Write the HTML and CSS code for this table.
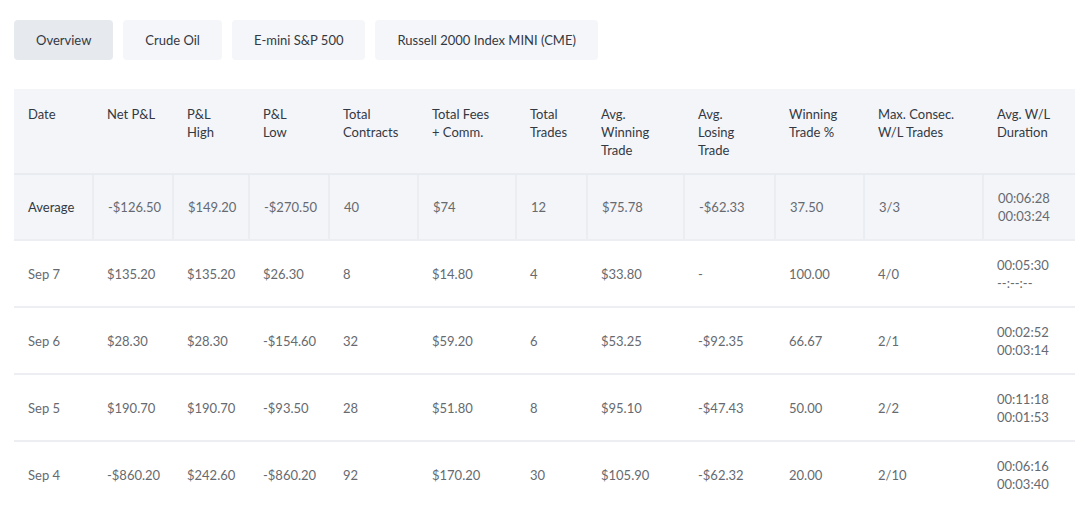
FILE: index.html
```html
<!DOCTYPE html>
<html>
<head>
<meta charset="utf-8">
<link rel="stylesheet" href="styles.css">
</head>
<body>
<div class="page">
  <div class="tabs">
    <button class="tab active">Overview</button>
    <button class="tab">Crude Oil</button>
    <button class="tab">E-mini S&amp;P 500</button>
    <button class="tab">Russell 2000 Index MINI (CME)</button>
  </div>
  <table class="stats">
    <colgroup>
      <col style="width:79px"><col style="width:80px"><col style="width:76px"><col style="width:80px">
      <col style="width:89px"><col style="width:98px"><col style="width:71px"><col style="width:97px">
      <col style="width:91px"><col style="width:89px"><col style="width:119px"><col style="width:92px">
    </colgroup>
    <thead>
      <tr>
        <th>Date</th><th>Net P&amp;L</th><th>P&amp;L<br>High</th><th>P&amp;L<br>Low</th><th>Total<br>Contracts</th>
        <th>Total Fees<br>+ Comm.</th><th>Total<br>Trades</th><th>Avg.<br>Winning<br>Trade</th><th>Avg.<br>Losing<br>Trade</th>
        <th>Winning<br>Trade %</th><th>Max. Consec.<br>W/L Trades</th><th>Avg. W/L<br>Duration</th>
      </tr>
    </thead>
    <tbody>
      <tr class="avg">
        <td class="label">Average</td><td>-$126.50</td><td>$149.20</td><td>-$270.50</td><td>40</td><td>$74</td><td>12</td><td>$75.78</td><td>-$62.33</td><td>37.50</td><td>3/3</td><td>00:06:28<br>00:03:24</td>
      </tr>
      <tr>
        <td>Sep 7</td><td>$135.20</td><td>$135.20</td><td>$26.30</td><td>8</td><td>$14.80</td><td>4</td><td>$33.80</td><td>-</td><td>100.00</td><td>4/0</td><td>00:05:30<br>--:--:--</td>
      </tr>
      <tr>
        <td>Sep 6</td><td>$28.30</td><td>$28.30</td><td>-$154.60</td><td>32</td><td>$59.20</td><td>6</td><td>$53.25</td><td>-$92.35</td><td>66.67</td><td>2/1</td><td>00:02:52<br>00:03:14</td>
      </tr>
      <tr>
        <td>Sep 5</td><td>$190.70</td><td>$190.70</td><td>-$93.50</td><td>28</td><td>$51.80</td><td>8</td><td>$95.10</td><td>-$47.43</td><td>50.00</td><td>2/2</td><td>00:11:18<br>00:01:53</td>
      </tr>
      <tr class="last">
        <td>Sep 4</td><td>-$860.20</td><td>$242.60</td><td>-$860.20</td><td>92</td><td>$170.20</td><td>30</td><td>$105.90</td><td>-$62.32</td><td>20.00</td><td>2/10</td><td>00:06:16<br>00:03:40</td>
      </tr>
    </tbody>
  </table>
</div>
</body>
</html>
```
FILE: styles.css
```css
* { box-sizing: border-box; }
body {
  margin: 0;
  background: #ffffff;
  font-family: Lato, "Liberation Sans", sans-serif;
  font-size: 13px;
  color: #5f6368;
}
.page {
  padding: 20px 11px 0 14px;
}
.tabs {
  display: flex;
  gap: 10px;
}
.tab {
  height: 40px;
  padding: 0 22px;
  border: none;
  border-radius: 4px;
  background: #f5f6f9;
  font-family: inherit;
  font-size: 13px;
  color: #333943;
  cursor: pointer;
}
.tab.active {
  background: #e6e9ed;
}
.stats {
  margin-top: 29px;
  width: 1061px;
  table-layout: fixed;
  border-collapse: collapse;
}
.stats th {
  background: #f4f5f9;
  text-align: left;
  vertical-align: top;
  font-weight: 400;
  color: #333943;
  font-size: 13px;
  line-height: 18px;
  padding: 16px 8px 13px 14px;
  height: 85px;
  border-bottom: 2px solid #e8ebf0;
}
.stats td {
  text-align: left;
  vertical-align: middle;
  line-height: 18px;
  padding: 0 8px 0 14px;
  height: 67px;
  color: #666a70;
  border-bottom: 2px solid #eceef2;
}
.stats tr.avg td {
  background: #f4f5f9;
  border-left: 2px solid #eaedf2;
  height: 66px;
}
.stats tr.avg td:first-child { border-left: none; }
.stats tr.avg td.label { color: #333943; }
.stats tr.last td { border-bottom: none; }
```
